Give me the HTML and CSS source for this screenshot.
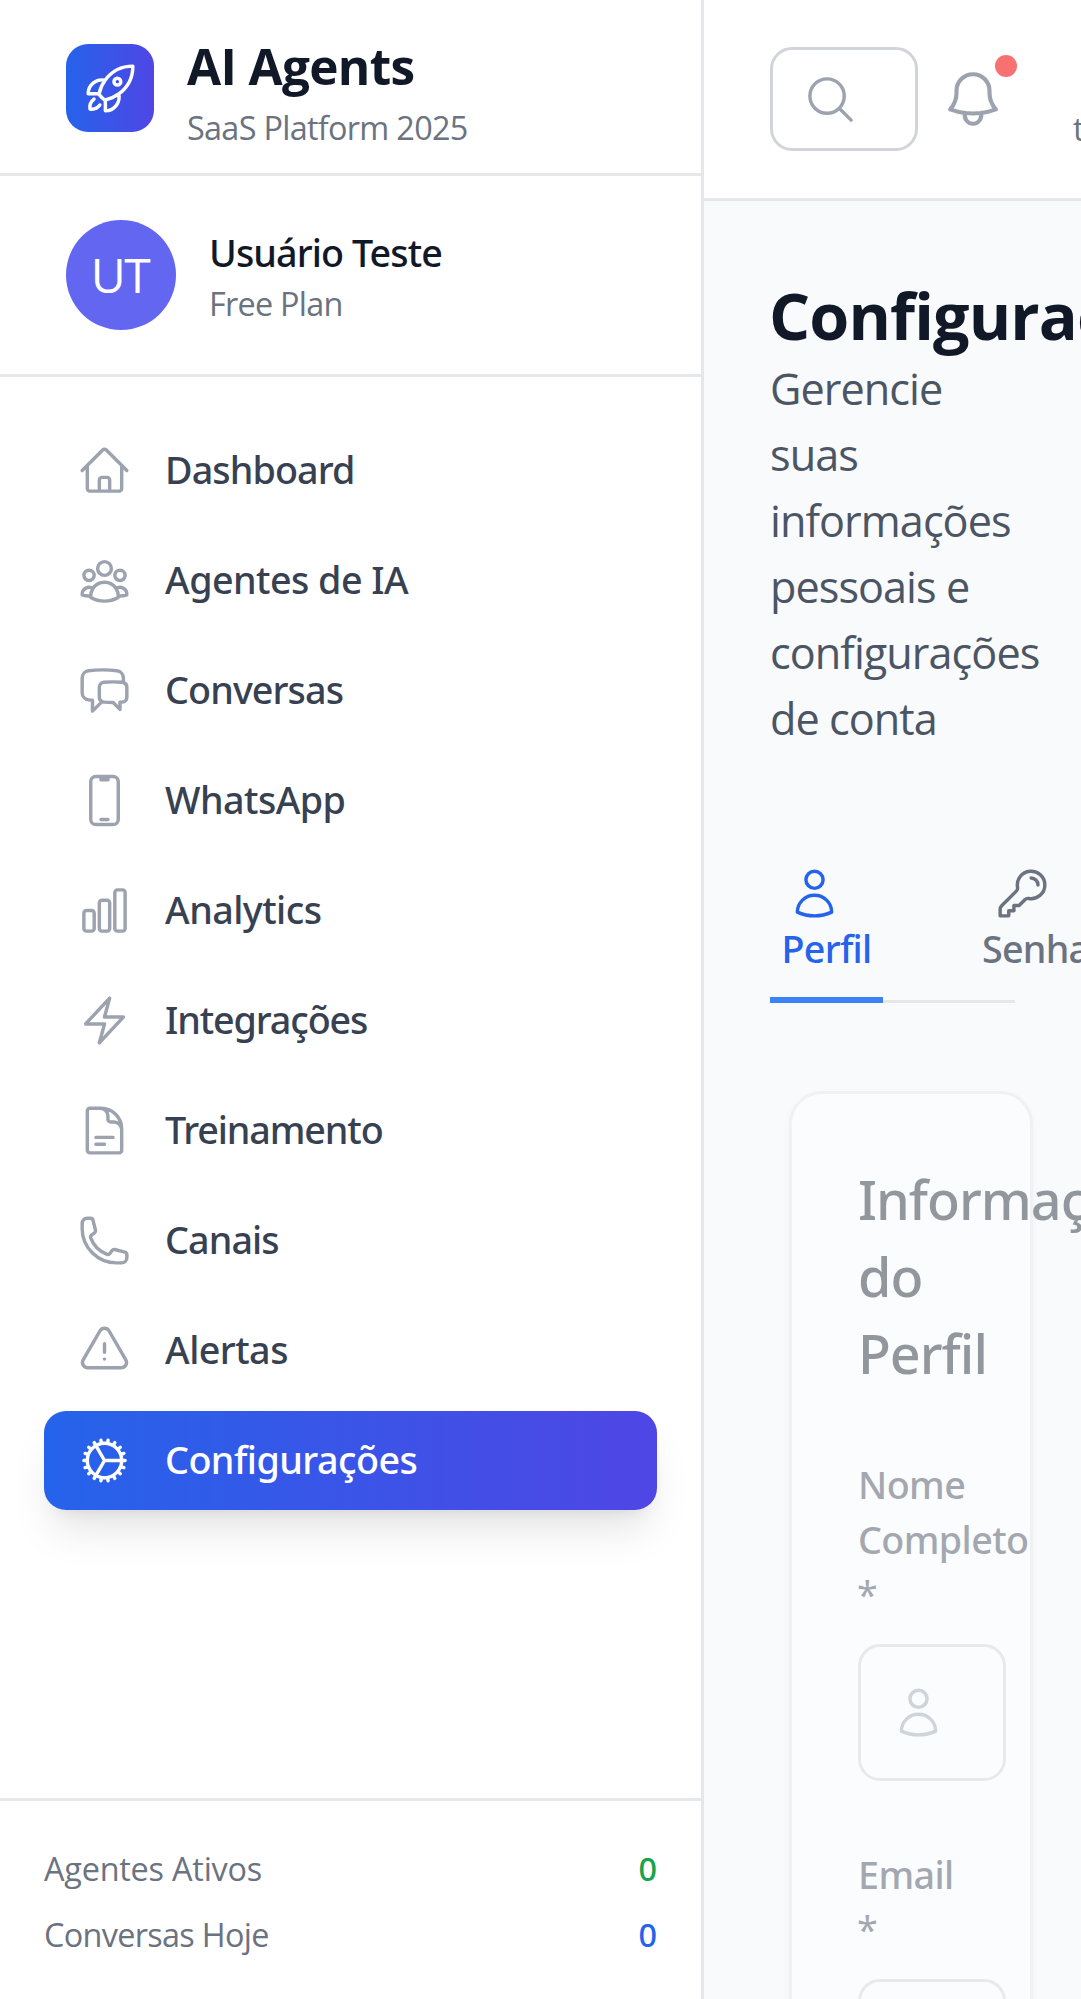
FILE: index.html
```html
<!DOCTYPE html>
<html lang="pt-BR">
<head>
<meta charset="utf-8">
<title>AI Agents</title>
<link rel="stylesheet" href="styles.css">
</head>
<body>
<div class="app">
  <aside class="sidebar">
    <div class="brand">
      <div class="brand-logo">
        <svg class="icon" viewBox="0 0 24 24"><path d="M15.59 14.37a6 6 0 01-5.84 7.38v-4.8m5.84-2.58a14.98 14.98 0 006.16-12.12A14.98 14.98 0 009.631 8.41m5.96 5.96a14.926 14.926 0 01-5.841 2.58m-.119-8.54a6 6 0 00-7.381 5.84h4.8m2.581-5.84a14.927 14.927 0 00-2.58 5.84m2.699 2.7c-.103.021-.207.041-.311.06a15.09 15.09 0 01-2.448-2.448 14.9 14.9 0 01.06-.312m-2.24 2.39a4.493 4.493 0 00-1.757 4.306 4.493 4.493 0 004.306-1.758M16.5 9a1.5 1.5 0 11-3 0 1.5 1.5 0 013 0z"/></svg>
      </div>
      <div class="brand-text">
        <h1 class="brand-name">AI Agents</h1>
        <p class="brand-tag">SaaS Platform 2025</p>
      </div>
    </div>
    <div class="user">
      <div class="avatar">UT</div>
      <div class="user-text">
        <p class="user-name">Usuário Teste</p>
        <p class="user-plan">Free Plan</p>
      </div>
    </div>
    <nav class="nav">
      <a class="nav-item"><svg class="icon" viewBox="0 0 24 24"><path d="M2.25 12l8.954-8.955c.44-.439 1.152-.439 1.591 0L21.75 12M4.5 9.75v10.125c0 .621.504 1.125 1.125 1.125H9.75v-4.875c0-.621.504-1.125 1.125-1.125h2.25c.621 0 1.125.504 1.125 1.125V21h4.125c.621 0 1.125-.504 1.125-1.125V9.75M8.25 21h8.25"/></svg><span class="nav-label">Dashboard</span></a>
      <a class="nav-item"><svg class="icon" viewBox="0 0 24 24"><path d="M18 18.72a9.094 9.094 0 003.741-.479 3 3 0 00-4.682-2.72m.94 3.198l.001.031c0 .225-.012.447-.037.666A11.944 11.944 0 0112 21c-2.17 0-4.207-.576-5.963-1.584A6.062 6.062 0 016 18.719m12 0a5.971 5.971 0 00-.941-3.197m0 0A5.995 5.995 0 0012 12.75a5.995 5.995 0 00-5.058 2.772m0 0a3 3 0 00-4.681 2.72 8.986 8.986 0 003.74.477m.94-3.197a5.971 5.971 0 00-.94 3.197M15 6.75a3 3 0 11-6 0 3 3 0 016 0zm6 3a2.25 2.25 0 11-4.5 0 2.25 2.25 0 014.5 0zm-13.5 0a2.25 2.25 0 11-4.5 0 2.25 2.25 0 014.5 0z"/></svg><span class="nav-label loose">Agentes de IA</span></a>
      <a class="nav-item"><svg class="icon" viewBox="0 0 24 24"><path d="M20.25 8.511c.884.284 1.5 1.128 1.5 2.097v4.286c0 1.136-.847 2.1-1.98 2.193-.34.027-.68.052-1.02.072v3.091l-3-3c-1.354 0-2.694-.055-4.02-.163a2.115 2.115 0 01-.825-.242m9.345-8.334a2.126 2.126 0 00-.476-.095 48.64 48.64 0 00-8.048 0c-1.131.094-1.976 1.057-1.976 2.192v4.286c0 .837.46 1.58 1.155 1.951m9.345-8.334V6.637c0-1.621-1.152-3.026-2.76-3.235A48.455 48.455 0 0011.25 3c-2.115 0-4.198.137-6.24.402-1.608.209-2.76 1.614-2.76 3.235v6.226c0 1.621 1.152 3.026 2.76 3.235.577.075 1.157.14 1.74.194V21l4.155-4.155"/></svg><span class="nav-label">Conversas</span></a>
      <a class="nav-item"><svg class="icon" viewBox="0 0 24 24"><path d="M10.5 1.5H8.25A2.25 2.25 0 006 3.75v16.5a2.25 2.25 0 002.25 2.25h7.5A2.25 2.25 0 0018 20.25V3.75a2.25 2.25 0 00-2.25-2.25H13.5m-3 0V3h3V1.5m-3 0h3m-3 18.75h3"/></svg><span class="nav-label loose">WhatsApp</span></a>
      <a class="nav-item"><svg class="icon" viewBox="0 0 24 24"><path d="M3 13.125C3 12.504 3.504 12 4.125 12h2.25c.621 0 1.125.504 1.125 1.125v6.75C7.5 20.496 6.996 21 6.375 21h-2.25A1.125 1.125 0 013 19.875v-6.75zM9.75 8.625c0-.621.504-1.125 1.125-1.125h2.25c.621 0 1.125.504 1.125 1.125v11.25c0 .621-.504 1.125-1.125 1.125h-2.25a1.125 1.125 0 01-1.125-1.125V8.625zM16.5 4.125c0-.621.504-1.125 1.125-1.125h2.25C20.496 3 21 3.504 21 4.125v15.75c0 .621-.504 1.125-1.125 1.125h-2.25a1.125 1.125 0 01-1.125-1.125V4.125z"/></svg><span class="nav-label loose">Analytics</span></a>
      <a class="nav-item"><svg class="icon" viewBox="0 0 24 24"><path d="M3.75 13.5l10.5-11.25L12 10.5h8.25L9.75 21.75 12 13.5H3.75z"/></svg><span class="nav-label tight">Integrações</span></a>
      <a class="nav-item"><svg class="icon" viewBox="0 0 24 24"><path d="M19.5 14.25v-2.625a3.375 3.375 0 00-3.375-3.375h-1.5A1.125 1.125 0 0113.5 7.125v-1.5a3.375 3.375 0 00-3.375-3.375H8.25m0 12.75h7.5m-7.5 3H12M10.5 2.25H5.625c-.621 0-1.125.504-1.125 1.125v17.25c0 .621.504 1.125 1.125 1.125h12.75c.621 0 1.125-.504 1.125-1.125V11.25a9 9 0 00-9-9z"/></svg><span class="nav-label tight">Treinamento</span></a>
      <a class="nav-item"><svg class="icon" viewBox="0 0 24 24"><path d="M2.25 6.75c0 8.284 6.716 15 15 15h2.25a2.25 2.25 0 002.25-2.25v-1.372c0-.516-.351-.966-.852-1.091l-4.423-1.106c-.44-.11-.902.055-1.173.417l-.97 1.293c-.282.376-.769.542-1.21.38a12.035 12.035 0 01-7.143-7.143c-.162-.441.004-.928.38-1.21l1.293-.97c.363-.271.527-.734.417-1.173L6.963 3.102a1.125 1.125 0 00-1.091-.852H4.5A2.25 2.25 0 002.25 4.5v2.25z"/></svg><span class="nav-label">Canais</span></a>
      <a class="nav-item"><svg class="icon" viewBox="0 0 24 24"><path d="M12 9v3.75m-9.303 3.376c-.866 1.5.217 3.374 1.948 3.374h14.71c1.73 0 2.813-1.874 1.948-3.374L13.949 3.378c-.866-1.5-3.032-1.5-3.898 0L2.697 16.126zM12 15.75h.007v.008H12v-.008z"/></svg><span class="nav-label loose">Alertas</span></a>
      <a class="nav-item active"><svg class="icon" viewBox="0 0 24 24"><path d="M4.5 12a7.5 7.5 0 0015 0m-15 0a7.5 7.5 0 1115 0m-15 0H3m16.5 0H21m-1.5 0H12m-8.457 3.077l1.41-.513m14.095-5.13l1.41-.513M5.106 17.785l1.15-.964m11.49-9.642l1.149-.964M7.501 19.795l.75-1.3m7.5-12.99l.75-1.3m-6.063 16.658l.26-1.477m2.605-14.772l.26-1.477m0 17.726l-.26-1.477M10.698 4.614l-.26-1.477M16.5 19.794l-.75-1.299M7.5 4.205L12 12m6.894 5.785l-1.149-.964M6.256 7.178l-1.15-.964m15.352 8.864l-1.41-.513M4.954 9.435l-1.41-.514M12.002 12l-3.75 6.495"/></svg><span class="nav-label loose">Configurações</span></a>
    </nav>
    <div class="stats">
      <div class="stat"><span class="stat-agents">Agentes Ativos</span><span class="stat-value green">0</span></div>
      <div class="stat"><span>Conversas Hoje</span><span class="stat-value blue">0</span></div>
    </div>
  </aside>

  <div class="main">
    <header class="topbar">
      <div class="search">
        <svg class="icon" viewBox="0 0 24 24"><path d="M21 21l-5.197-5.197m0 0A7.5 7.5 0 105.196 5.196a7.5 7.5 0 0010.607 10.607z"/></svg>
      </div>
      <div class="bell">
        <svg class="icon" viewBox="0 0 24 24"><path d="M14.857 17.082a23.848 23.848 0 005.454-1.31A8.967 8.967 0 0118 9.75v-.7V9A6 6 0 006 9v.75a8.967 8.967 0 01-2.312 6.022c1.733.64 3.56 1.085 5.455 1.31m5.714 0a24.255 24.255 0 01-5.714 0m5.714 0a3 3 0 11-5.714 0"/></svg>
        <span class="bell-dot"></span>
      </div>
      <span class="account">t</span>
    </header>

    <main class="content">
      <h2 class="page-title">Configurações</h2>
      <p class="page-lead">Gerencie suas informações pessoais e configurações de conta</p>

      <div class="tabs">
        <button class="tab active"><svg class="icon" viewBox="0 0 24 24"><path d="M15.75 6a3.75 3.75 0 11-7.5 0 3.75 3.75 0 017.5 0zM4.501 20.118a7.5 7.5 0 0114.998 0A17.933 17.933 0 0112 21.75c-2.676 0-5.216-.584-7.499-1.632z"/></svg><span>Perfil</span></button>
        <button class="tab"><svg class="icon" viewBox="0 0 24 24"><path d="M15.75 5.25a3 3 0 013 3m3 0a6 6 0 01-7.029 5.912c-.563-.097-1.159.026-1.563.43L10.5 17.25H8.25v2.25H6v2.25H2.25v-2.818c0-.597.237-1.17.659-1.591l6.499-6.499c.404-.404.527-1 .43-1.563A6 6 0 1121.75 8.25z"/></svg><span>Senha</span></button>
      </div>

      <section class="card">
        <h3 class="card-title">Informações do Perfil</h3>
        <div class="field">
          <label class="field-label">Nome Completo <span class="required">*</span></label>
          <div class="field-input"><svg class="icon" viewBox="0 0 24 24"><path d="M15.75 6a3.75 3.75 0 11-7.5 0 3.75 3.75 0 017.5 0zM4.501 20.118a7.5 7.5 0 0114.998 0A17.933 17.933 0 0112 21.75c-2.676 0-5.216-.584-7.499-1.632z"/></svg></div>
        </div>
        <div class="field">
          <label class="field-label">Email <span class="required">*</span></label>
          <div class="field-input"></div>
        </div>
      </section>
    </main>
  </div>
</div>
</body>
</html>
```
FILE: styles.css
```css
* {
  box-sizing: border-box;
  margin: 0;
  padding: 0;
}

body {
  height: 1999px;
  overflow: hidden;
  background: #f9fafc;
  font-family: "Open Sans", "Noto Sans", sans-serif;
  color: #111827;
}

.app {
  display: flex;
  width: 1081px;
  height: 1999px;
  overflow: hidden;
}

.icon {
  display: block;
  flex: none;
  width: 55px;
  height: 55px;
  fill: none;
  stroke: currentColor;
  stroke-width: 1.5;
  stroke-linecap: round;
  stroke-linejoin: round;
}

/* Sidebar */

.sidebar {
  display: flex;
  flex-direction: column;
  flex: none;
  width: 704px;
  height: 1999px;
  border-right: 3px solid #e5e7eb;
  background: #fff;
}

.brand {
  display: flex;
  gap: 33px;
  height: 176px;
  padding: 24px 66px 0;
  border-bottom: 3px solid #e5e7eb;
}

.brand-logo {
  display: flex;
  align-items: center;
  justify-content: center;
  width: 88px;
  height: 88px;
  margin-top: 20px;
  border-radius: 22px;
  background: linear-gradient(to right, #2563eb, #4f46e5);
  color: #fff;
}

.brand-name {
  font-size: 49.5px;
  font-weight: 700;
  line-height: 77px;
  letter-spacing: -0.65px;
  padding-top: 4px;
}

.brand-tag {
  font-size: 32.4px;
  line-height: 44px;
  letter-spacing: -0.7px;
  color: #6b7280;
}

.user {
  display: flex;
  gap: 33px;
  height: 201px;
  padding: 44px 66px 0;
  border-bottom: 3px solid #e5e7eb;
}

.avatar {
  display: flex;
  align-items: center;
  justify-content: center;
  width: 110px;
  height: 110px;
  padding: 0 2px 2px 0;
  border-radius: 50%;
  background: #6366f1;
  color: #fff;
  font-size: 48px;
  letter-spacing: -1.5px;
}

.user-name {
  padding-top: 5px;
  font-family: "Noto Sans", sans-serif;
  font-size: 37.7px;
  font-weight: 500;
  line-height: 55px;
  letter-spacing: -0.92px;
}

.user-plan {
  padding-top: 1px;
  font-size: 32.4px;
  line-height: 44px;
  letter-spacing: -0.75px;
  color: #6b7280;
}

.nav {
  display: flex;
  flex-direction: column;
  flex: 1;
  gap: 11px;
  padding: 44px 44px 0;
}

.nav-item {
  display: flex;
  align-items: center;
  gap: 33px;
  height: 99px;
  padding: 0 33px;
  border-radius: 22px;
  color: #9ca3af;
}

.nav-label {
  padding-bottom: 3px;
  font-family: "Noto Sans", sans-serif;
  font-size: 37.7px;
  font-weight: 500;
  line-height: 55px;
  letter-spacing: -0.9px;
  color: #374151;
}

.nav-label.loose {
  letter-spacing: -0.55px;
}

.nav-label.tight {
  letter-spacing: -1.12px;
}

.nav-item.active {
  background: linear-gradient(to right, #2563eb, #4f46e5);
  box-shadow: 0 27.5px 41px -8px rgba(0, 0, 0, 0.1), 0 11px 16.5px -11px rgba(0, 0, 0, 0.1);
  color: #fff;
}

.nav-item.active .nav-label {
  color: #fff;
}

.stats {
  display: flex;
  flex-direction: column;
  gap: 22px;
  height: 201px;
  padding: 45px 44px 0;
  border-top: 3px solid #e5e7eb;
}

.stat {
  display: flex;
  justify-content: space-between;
  font-size: 32.4px;
  line-height: 44px;
  letter-spacing: -0.68px;
  color: #6b7280;
}

.stat-agents {
  letter-spacing: -0.21px;
}

.stat-value {
  font-family: "Noto Sans", sans-serif;
  font-weight: 500;
  letter-spacing: 0;
}

.green {
  color: #16a34a;
}

.blue {
  color: #2563eb;
}

/* Main column */

.main {
  flex: none;
  width: 377px;
  overflow: hidden;
}

.topbar {
  display: flex;
  height: 201px;
  padding: 47px 0 0 66px;
  border-bottom: 3px solid #e5e7eb;
  background: #fff;
}

.search {
  display: flex;
  align-items: center;
  flex: none;
  width: 148px;
  height: 104px;
  padding-left: 30px;
  border: 3px solid #d1d5db;
  border-radius: 22px;
  color: #9ca3af;
}

.bell {
  position: relative;
  flex: none;
  width: 88px;
  height: 88px;
  margin: 8px 0 0 11px;
  padding: 11px;
  color: #9ca3af;
}

.bell .icon {
  width: 66px;
  height: 66px;
}

.bell-dot {
  position: absolute;
  top: 0;
  right: 0;
  width: 22px;
  height: 22px;
  border-radius: 50%;
  background: #f87171;
}

.account {
  margin: 59px 0 0 56px;
  font-size: 32.4px;
  line-height: 44px;
  color: #6b7280;
}

.content {
  width: 377px;
  padding: 81px 66px 0;
}

.page-title {
  margin-left: -1px;
  font-size: 64.7px;
  font-weight: 700;
  line-height: 66px;
  letter-spacing: -0.9px;
}

.page-lead {
  width: 245px;
  padding-top: 8px;
  font-size: 43.2px;
  line-height: 66px;
  letter-spacing: -0.95px;
  color: #4b5563;
}

.tabs {
  display: flex;
  gap: 88px;
  width: 245px;
  height: 204px;
  margin-top: 47px;
  padding-top: 66px;
  border-bottom: 3px solid #e5e7eb;
}

.tab {
  display: flex;
  flex: none;
  flex-direction: column;
  height: 138px;
  padding: 1px 11px 0;
  border: 0;
  border-bottom: 6px solid transparent;
  background: none;
  color: #6b7280;
  font-family: "Noto Sans", sans-serif;
  font-size: 37.7px;
  font-weight: 500;
  line-height: 55px;
  letter-spacing: -0.75px;
}

.tab .icon {
  margin: 0 22px 0 6px;
}

.tab:last-child .icon {
  margin-left: 13px;
}

.tab.active {
  width: 113px;
  border-bottom-color: #3b82f6;
  color: #2563eb;
}

/* Profile card, mid fade-in */

.card {
  width: 244px;
  height: 1000px;
  margin: 88px 0 0 19px;
  padding: 66px;
  border: 3px solid #e5e7eb;
  border-radius: 33px;
  background: #fff;
  box-shadow: 0 3px 6px rgba(0, 0, 0, 0.05);
  opacity: 0.44;
}

.card-title {
  width: 110px;
  padding-top: 1px;
  font-family: "Noto Sans", sans-serif;
  font-size: 53.9px;
  font-weight: 500;
  line-height: 77px;
  letter-spacing: -1px;
}

.field {
  padding-top: 66px;
}

.card-title + .field {
  padding-top: 65px;
}

.field-label {
  display: block;
  width: 120px;
  font-family: "Noto Sans", sans-serif;
  font-size: 37.7px;
  font-weight: 500;
  line-height: 55px;
  letter-spacing: -0.6px;
  color: #374151;
}

.required {
  margin-left: -1px;
  font-weight: 400;
}

.field-input {
  display: flex;
  align-items: center;
  width: 148px;
  height: 137px;
  margin-top: 22px;
  padding-left: 30px;
  border: 3px solid #d1d5db;
  border-radius: 22px;
  color: #9ca3af;
}
```
